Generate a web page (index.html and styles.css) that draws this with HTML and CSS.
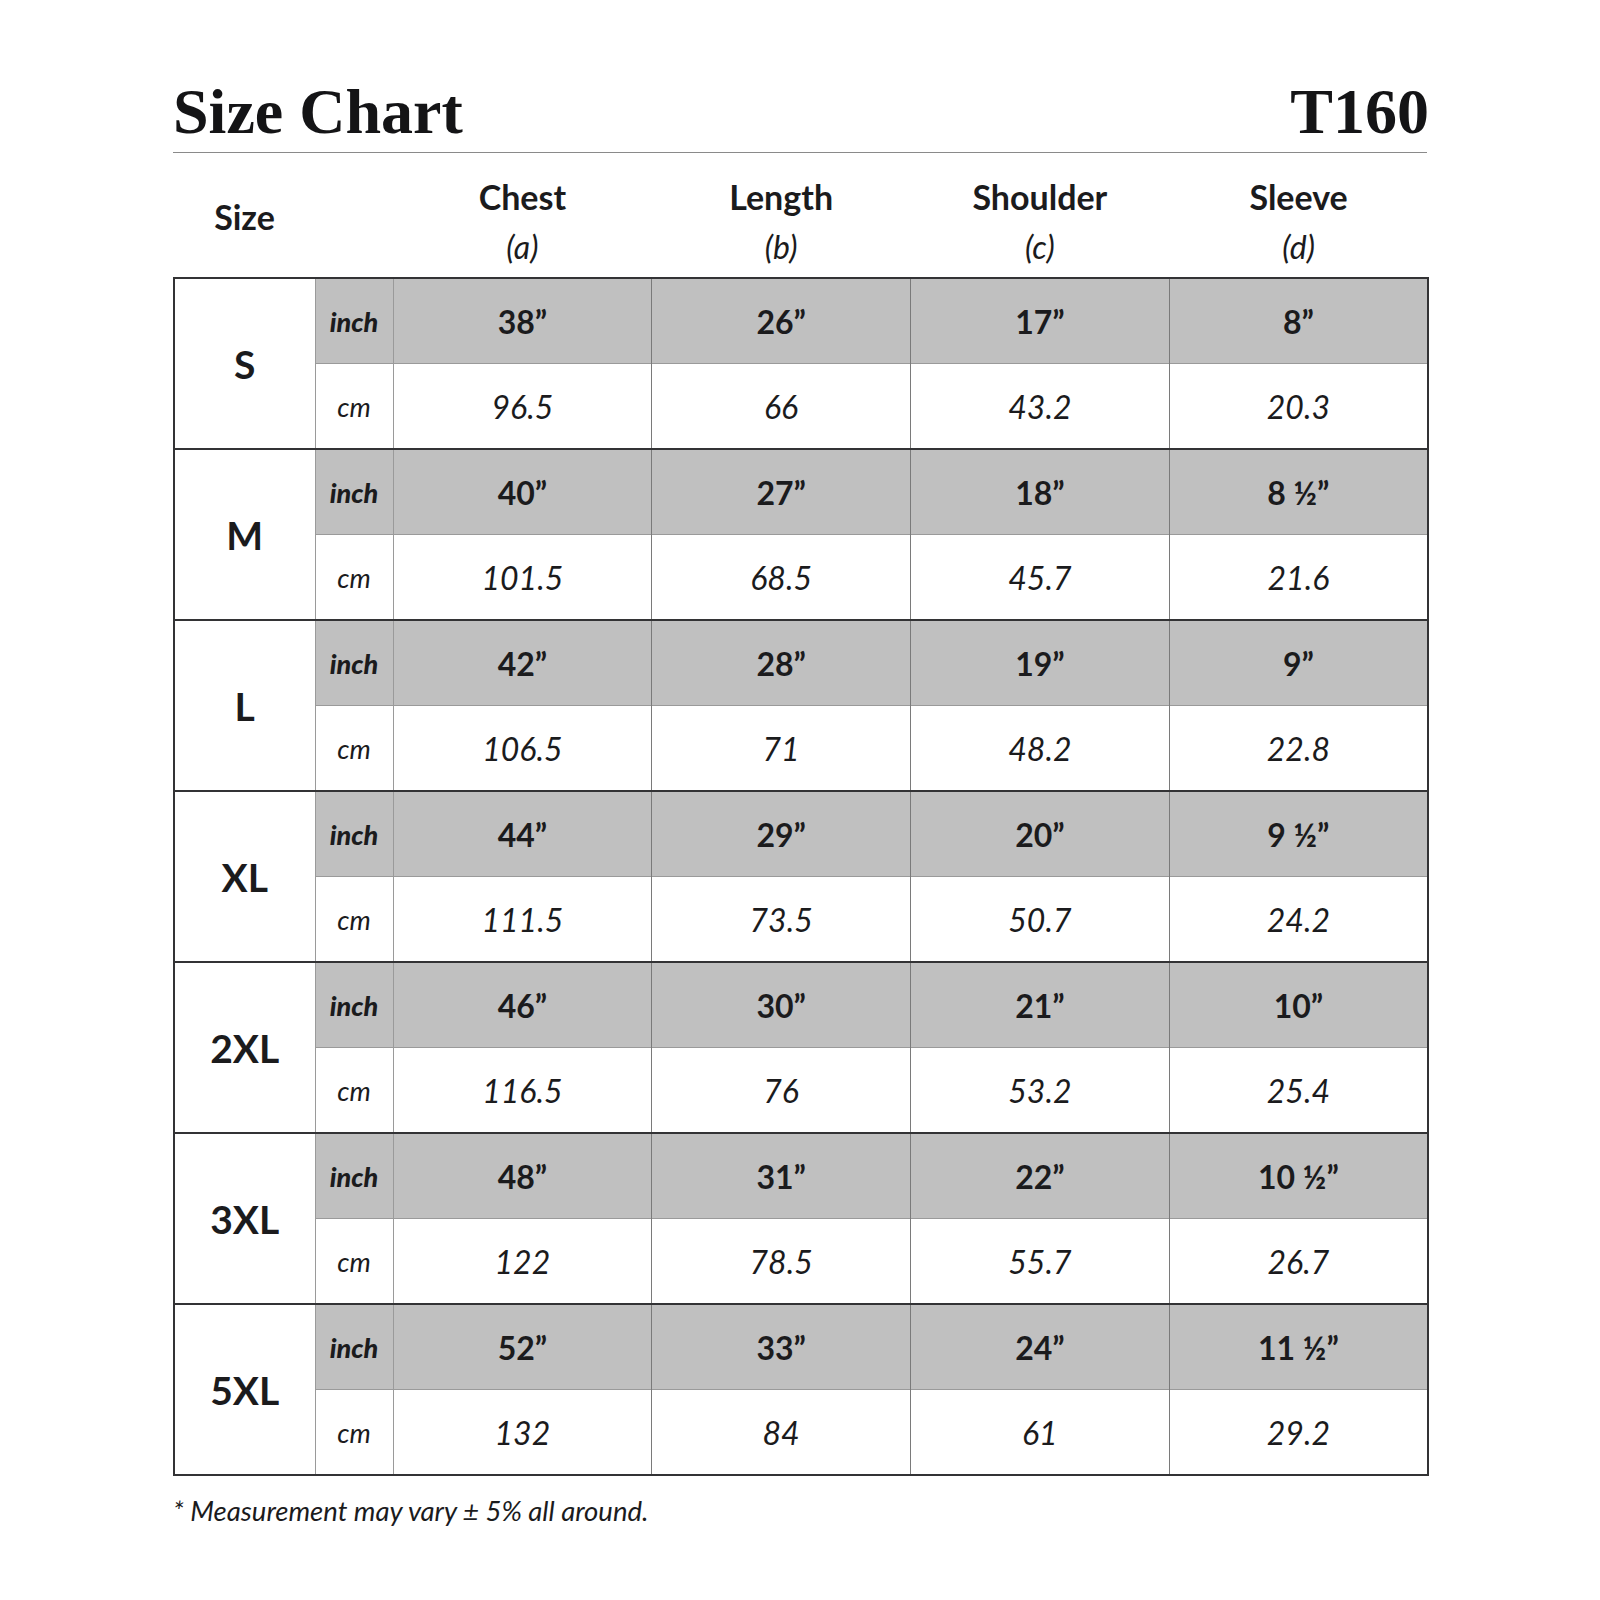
FILE: index.html
```html
<!DOCTYPE html>
<html>
<head>
<meta charset="utf-8">
<link rel="stylesheet" href="styles.css">
</head>
<body>
<div class="sheet">
  <div class="title-row">
    <h1 class="title">Size Chart</h1>
    <div class="code">T160</div>
  </div>
  <table class="chart">
    <colgroup>
      <col class="c-size"><col class="c-unit"><col class="c-val"><col class="c-val"><col class="c-val"><col class="c-val">
    </colgroup>
    <thead>
      <tr>
        <th class="h-size">Size</th>
        <th></th>
        <th><span class="h-name">Chest</span><span class="h-sub">(a)</span></th>
        <th><span class="h-name">Length</span><span class="h-sub">(b)</span></th>
        <th><span class="h-name">Shoulder</span><span class="h-sub">(c)</span></th>
        <th><span class="h-name">Sleeve</span><span class="h-sub">(d)</span></th>
      </tr>
    </thead>
    <tbody>
      <tr class="inch"><td class="size" rowspan="2">S</td><td class="unit">inch</td><td>38”</td><td>26”</td><td>17”</td><td>8”</td></tr>
      <tr class="cm"><td class="unit">cm</td><td>96.5</td><td>66</td><td>43.2</td><td>20.3</td></tr>
      <tr class="inch"><td class="size" rowspan="2">M</td><td class="unit">inch</td><td>40”</td><td>27”</td><td>18”</td><td>8 ½”</td></tr>
      <tr class="cm"><td class="unit">cm</td><td>101.5</td><td>68.5</td><td>45.7</td><td>21.6</td></tr>
      <tr class="inch"><td class="size" rowspan="2">L</td><td class="unit">inch</td><td>42”</td><td>28”</td><td>19”</td><td>9”</td></tr>
      <tr class="cm"><td class="unit">cm</td><td>106.5</td><td>71</td><td>48.2</td><td>22.8</td></tr>
      <tr class="inch"><td class="size" rowspan="2">XL</td><td class="unit">inch</td><td>44”</td><td>29”</td><td>20”</td><td>9 ½”</td></tr>
      <tr class="cm"><td class="unit">cm</td><td>111.5</td><td>73.5</td><td>50.7</td><td>24.2</td></tr>
      <tr class="inch"><td class="size" rowspan="2">2XL</td><td class="unit">inch</td><td>46”</td><td>30”</td><td>21”</td><td>10”</td></tr>
      <tr class="cm"><td class="unit">cm</td><td>116.5</td><td>76</td><td>53.2</td><td>25.4</td></tr>
      <tr class="inch"><td class="size" rowspan="2">3XL</td><td class="unit">inch</td><td>48”</td><td>31”</td><td>22”</td><td>10 ½”</td></tr>
      <tr class="cm"><td class="unit">cm</td><td>122</td><td>78.5</td><td>55.7</td><td>26.7</td></tr>
      <tr class="inch"><td class="size" rowspan="2">5XL</td><td class="unit">inch</td><td>52”</td><td>33”</td><td>24”</td><td>11 ½”</td></tr>
      <tr class="cm"><td class="unit">cm</td><td>132</td><td>84</td><td>61</td><td>29.2</td></tr>
    </tbody>
  </table>
  <p class="note">* Measurement may vary ± 5% all around.</p>
</div>
</body>
</html>
```

FILE: styles.css
```css
html, body {
  margin: 0;
  padding: 0;
  background: #ffffff;
}

body {
  font-family: Lato, "Open Sans", sans-serif;
  color: #1b1b1d;
}

.sheet {
  width: 1254px;
  margin-left: 173px;
  padding-top: 74px;
}

.title-row {
  display: flex;
  justify-content: space-between;
  align-items: flex-end;
  border-bottom: 1px solid #8a8a8a;
  height: 78px;
}

.title, .code {
  font-family: "Liberation Serif", "Times New Roman", serif;
  font-weight: 700;
  font-size: 64px;
  line-height: 64px;
  margin: 0;
  padding-bottom: 8px;
  color: #141416;
}

.code {
  margin-right: -2px;
}

.chart {
  width: 1254px;
  border-collapse: collapse;
  table-layout: fixed;
}

.c-size { width: 141px; }
.c-unit { width: 78px; }
.c-val { width: 258.75px; }

.chart thead th {
  height: 120px;
  padding: 0;
  font-weight: 700;
  text-align: center;
  vertical-align: top;
}

.chart thead th.h-size {
  vertical-align: middle;
  font-size: 34px;
  padding-top: 3px;
  padding-bottom: 1px;
}

.h-name {
  display: block;
  font-size: 34px;
  line-height: 40px;
  margin-top: 24px;
}

.h-sub {
  display: block;
  font-size: 32px;
  font-style: italic;
  font-weight: 400;
  line-height: 40px;
  margin-top: 10px;
}

.chart tbody {
  border: 2px solid #333335;
}

.chart tbody td {
  height: 84px;
  padding: 0;
  text-align: center;
  vertical-align: middle;
  border-left: 1px solid #7a7a7a;
  border-right: 1px solid #7a7a7a;
  font-size: 32px;
}

.chart tbody tr.inch td {
  border-top: 2px solid #333335;
  background: #c0c0c0;
  font-weight: 700;
}

.chart tbody tr.cm td {
  border-top: 1px solid #9a9a9a;
  font-style: italic;
}

.chart tbody tr.inch td.size {
  background: #ffffff;
  font-size: 39px;
  font-weight: 700;
  font-style: normal;
  border-right: 1px solid #9a9a9a;
}

.chart tbody td.unit {
  font-size: 27px;
  font-style: italic;
  border-right: 1px solid #9a9a9a;
}

.chart tbody tr.inch td.unit {
  font-weight: 900;
}

.chart tbody tr.cm td.unit {
  font-weight: 400;
}

.note {
  margin: 18px 0 0 0;
  font-size: 27.5px;
  font-style: italic;
}
```
